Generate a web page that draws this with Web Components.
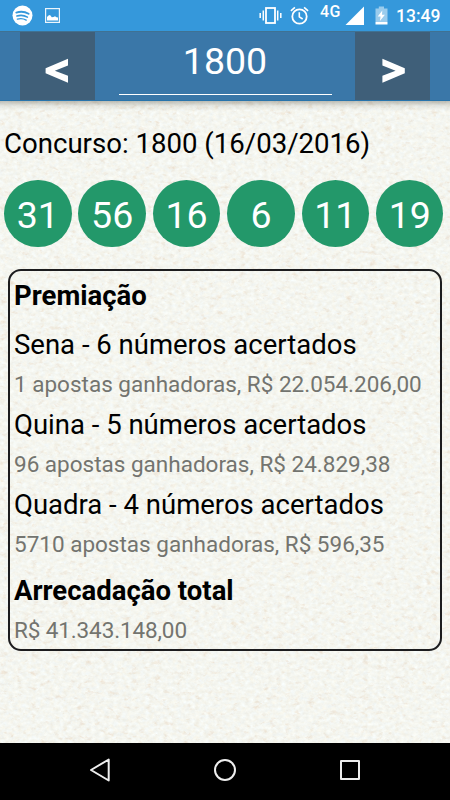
<!DOCTYPE html>
<html lang="pt-BR">
<head>
<meta charset="utf-8">
<title>Concurso 1800</title>
<style>
    body {
        margin: 0;
        font-family: Roboto, "Noto Sans", sans-serif;
        color: #000;
    }
</style>
</head>
<body>
<lottery-screen>
    <status-bar slot="status" time="13:49" network="4G"></status-bar>
    <draw-picker slot="picker" number="1800"></draw-picker>

    <draw-title>Concurso: 1800 (16/03/2016)</draw-title>
    <ball-row>
        <lottery-ball>31</lottery-ball>
        <lottery-ball>56</lottery-ball>
        <lottery-ball>16</lottery-ball>
        <lottery-ball>6</lottery-ball>
        <lottery-ball>11</lottery-ball>
        <lottery-ball>19</lottery-ball>
    </ball-row>
    <prize-card>
        <span slot="heading">Premiação</span>
        <prize-item name="Sena - 6 números acertados">1 apostas ganhadoras, R$ 22.054.206,00</prize-item>
        <prize-item name="Quina - 5 números acertados">96 apostas ganhadoras, R$ 24.829,38</prize-item>
        <prize-item name="Quadra - 4 números acertados">5710 apostas ganhadoras, R$ 596,35</prize-item>
        <prize-item name="Arrecadação total" strong>R$ 41.343.148,00</prize-item>
    </prize-card>

    <nav-bar slot="nav"></nav-bar>
</lottery-screen>

<script>
class BaseElement extends HTMLElement {
    constructor() {
        super();
        this.attachShadow({ mode: "open" });
    }

    connectedCallback() {
        const template = document.createElement("template");
        template.innerHTML = `<style>${this.getStyle()}</style>${this.getTemplate()}`;
        this.shadowRoot.replaceChildren(template.content.cloneNode(true));
    }
}

class LotteryScreen extends BaseElement {
    getStyle() {
        return `
            :host {
                display: grid;
                grid-template-rows: 31px 70px 1fr 57px;
                width: 450px;
                height: 800px;
                overflow: hidden;
            }

            /* paper and content share the same row */
            .paper, main {
                grid-area: 3 / 1;
                min-height: 0;
            }

            .paper {
                width: 450px;
                height: 642px;
                display: block;
            }

            main {
                z-index: 1;
                background: linear-gradient(rgba(90, 90, 80, .38), rgba(90, 90, 80, .1) 5px, transparent 10px);
            }
        `;
    }

    getTemplate() {
        return `
            <slot name="status"></slot>
            <slot name="picker"></slot>
            <svg class="paper" viewBox="0 0 450 642" aria-hidden="true">
                <filter id="grain" x="0" y="0" width="100%" height="100%" color-interpolation-filters="sRGB">
                    <feTurbulence type="fractalNoise" baseFrequency=".22 .28" numOctaves="3" seed="8"/>
                    <feColorMatrix values=".07 0 0 0 .925  .07 .04 0 0 .91  .07 .1 0 0 .857  0 0 0 0 1"/>
                </filter>
                <!-- sparse warm fibres -->
                <filter id="fibres" x="0" y="0" width="100%" height="100%" color-interpolation-filters="sRGB">
                    <feTurbulence type="fractalNoise" baseFrequency=".13 .2" numOctaves="4" seed="21"/>
                    <feColorMatrix values="0 0 0 0 .88  0 0 0 0 .77  0 0 0 0 .66  2.6 0 0 0 -1.55"/>
                </filter>
                <rect width="450" height="642" filter="url(#grain)"/>
                <rect width="450" height="642" filter="url(#fibres)" opacity=".5"/>
            </svg>
            <main><slot></slot></main>
            <slot name="nav"></slot>
        `;
    }
}

class StatusBar extends BaseElement {
    getStyle() {
        return `
            :host {
                display: flex;
                align-items: flex-start;
                background: #3598db;
                color: #fff;
                height: 31px;
            }
            svg { display: block; flex: none; }
            .spotify { margin: 5px 0 0 12px; }
            .picture { margin: 8px 0 0 12px; }
            .vibrate { margin: 6px 0 0 auto; }
            .alarm { margin: 6px 0 0 8px; }
            .network {
                margin: 3px 0 0 11px;
                width: 21px;
                font: 500 16px/18px Roboto, sans-serif;
                letter-spacing: .5px;
                white-space: nowrap;
            }
            .signal { margin: 6px 0 0 4px; }
            .battery { margin: 6px 0 0 10px; }
            time {
                margin: 6px 10px 0 8px;
                width: 44px;
                font: 500 17.5px/21px Roboto, sans-serif;
                white-space: nowrap;
            }
        `;
    }

    getTemplate() {
        return `
            <svg class="spotify" width="21" height="21" viewBox="0 0 21 21" fill="none" stroke="#3598db" stroke-linecap="round">
                <circle cx="10.5" cy="10.5" r="10" fill="#fff" stroke="none"/>
                <path stroke-width="1.9" d="M4.3 7.6c4-1.2 8.8-.8 12.3 1.2"/>
                <path stroke-width="1.6" d="M4.9 11c3.5-1 7.5-.6 10.5 1.1"/>
                <path stroke-width="1.4" d="M5.4 14.1c3-.8 6.2-.5 8.8 1"/>
            </svg>
            <svg class="picture" width="15" height="15" viewBox="0 0 15 15">
                <rect x=".6" y=".6" width="13.8" height="13.8" fill="none" stroke="#fff" stroke-width="1.2" opacity=".9"/>
                <path fill="#fff" d="M2 12.6V9l1.500-1.500L5 7l1.800 2.200L8.500 9l1.500-.8 1.500 1L13 9.500v3.100z"/>
            </svg>
            <svg class="vibrate" width="23" height="19" viewBox="0 0 23 19" fill="none" stroke="#fff">
                <rect x="7" y="2" width="9" height="15" stroke-width="1.8"/>
                <path stroke-width="1.5" d="M4.3 4.5v10M18.7 4.5v10M1.2 7v5M21.8 7v5"/>
            </svg>
            <svg class="alarm" width="19" height="19" viewBox="0 0 19 19" fill="none" stroke="#fff">
                <circle cx="9.5" cy="10.5" r="7.2" stroke-width="1.8"/>
                <path stroke-width="1.6" d="M9.3 6.2v4.6l3.4 2.2M.9 4.9l4-3.5M18.1 4.9l-4-3.5"/>
            </svg>
            <span class="network">${this.getAttribute("network")}</span>
            <svg class="signal" width="20" height="19" viewBox="0 0 20 19"><path fill="#fff" d="M19 .5V19H.5z"/></svg>
            <svg class="battery" width="13" height="19" viewBox="0 0 13 19">
                <path fill="#fff" opacity=".5" d="M.5 2.5h3.300V.5h5.200v2h3.500V16H.5z"/>
                <path fill="#fff" d="M.5 16h12v2.500H.5zM7.300 4.500L2.700 10.500h2.900l-.7 4.500 5-6.200H7z"/>
            </svg>
            <time>${this.getAttribute("time")}</time>
        `;
    }
}

class DrawPicker extends BaseElement {
    getStyle() {
        return `
            :host {
                display: flex;
                justify-content: space-between;
                box-sizing: border-box;
                height: 70px;
                padding: 0 20px;
                background: #3a77a8;
                border-top: 1px solid #3f7293;
                border-bottom: 1px solid #2874ab;
                color: #fff;
            }
            button {
                display: grid;
                place-items: center;
                width: 75px;
                padding: 0;
                border: 0;
                background: #3f5f79;
            }
            .field {
                box-sizing: border-box;
                width: 213px;
                height: 63px;
                border-bottom: 1px solid #fff;
                text-align: center;
                font-size: 37.5px;
                line-height: 58px;
            }
        `;
    }

    getTemplate() {
        return `
            <button aria-label="Anterior">
                <svg width="75" height="68" viewBox="0 0 75 68"><path fill="#fff" d="M48 26.8v6.800l-13.200 5.100L48 43.800v7L25.600 41.300v-5z"/></svg>
            </button>
            <div class="field">${this.getAttribute("number")}</div>
            <button aria-label="Próximo">
                <svg width="75" height="68" viewBox="0 0 75 68"><path fill="#fff" d="M27.4 26.8v6.800l13.200 5.100-13.200 5.100v7L49.800 41.300v-5z"/></svg>
            </button>
        `;
    }
}

class DrawTitle extends BaseElement {
    getStyle() {
        return `
            :host {
                display: block;
                padding: 23px 4px 15.5px;
                font-size: 27.6px;
                line-height: 40px;
                white-space: nowrap;
            }
        `;
    }

    getTemplate() {
        return `<slot></slot>`;
    }
}

class BallRow extends BaseElement {
    getStyle() {
        return `
            :host {
                display: flex;
                justify-content: space-between;
                padding: 0 6.5px 0 4px;
            }
        `;
    }

    getTemplate() {
        return `<slot></slot>`;
    }
}

class LotteryBall extends BaseElement {
    getStyle() {
        return `
            :host {
                display: block;
                width: 67.5px;
                height: 67.5px;
                border-radius: 50%;
                background: #23986a;
                color: #fff;
                font-size: 37.5px;
                line-height: 70px;
                text-align: center;
            }
        `;
    }

    getTemplate() {
        return `<slot></slot>`;
    }
}

class PrizeCard extends BaseElement {
    getStyle() {
        return `
            :host {
                display: block;
                box-sizing: border-box;
                height: 382px;
                margin: 22px 8px 0;
                padding: 5px 4px 0;
                border: 2px solid #1c1c1e;
                border-radius: 13px;
            }
            h2 {
                margin: 0 0 8px;
                font-size: 27.5px;
                line-height: 40px;
                font-weight: 700;
            }
        `;
    }

    getTemplate() {
        return `
            <h2><slot name="heading"></slot></h2>
            <slot></slot>
        `;
    }
}

class PrizeItem extends BaseElement {
    getStyle() {
        return `
            :host {
                display: block;
                white-space: nowrap;
            }
            :host([strong]) { margin-top: 6px; }
            :host([strong]) .name { font-weight: 700; }
            :host([strong]) .value { letter-spacing: -.12px; }
            .name {
                font-size: 27.5px;
                line-height: 41px;
            }
            .value {
                font-size: 22.5px;
                line-height: 38px;
                padding-bottom: 1px;
                color: #73746f;
            }
        `;
    }

    getTemplate() {
        return `
            <div class="name">${this.getAttribute("name")}</div>
            <div class="value"><slot></slot></div>
        `;
    }
}

class NavBar extends BaseElement {
    getStyle() {
        return `
            :host {
                display: grid;
                grid-template-columns: repeat(3, 125px);
                justify-content: center;
                place-items: center;
                height: 57px;
                background: #000;
                z-index: 1;
            }
            svg { display: block; margin-top: -3px; }
        `;
    }

    getTemplate() {
        return `
            <svg width="26" height="26" viewBox="0 0 26 26" fill="none" stroke="#eee" stroke-width="2" stroke-linejoin="round"><path d="M21.7 2.5v21L4 13z"/></svg>
            <svg width="26" height="26" viewBox="0 0 26 26" fill="none" stroke="#eee" stroke-width="2"><circle cx="13" cy="13" r="10"/></svg>
            <svg width="26" height="26" viewBox="0 0 26 26" fill="none" stroke="#eee" stroke-width="2" stroke-linejoin="round"><path d="M4 4h18v18H4z"/></svg>
        `;
    }
}

customElements.define("lottery-screen", LotteryScreen);
customElements.define("status-bar", StatusBar);
customElements.define("draw-picker", DrawPicker);
customElements.define("draw-title", DrawTitle);
customElements.define("ball-row", BallRow);
customElements.define("lottery-ball", LotteryBall);
customElements.define("prize-card", PrizeCard);
customElements.define("prize-item", PrizeItem);
customElements.define("nav-bar", NavBar);
</script>
</body>
</html>
